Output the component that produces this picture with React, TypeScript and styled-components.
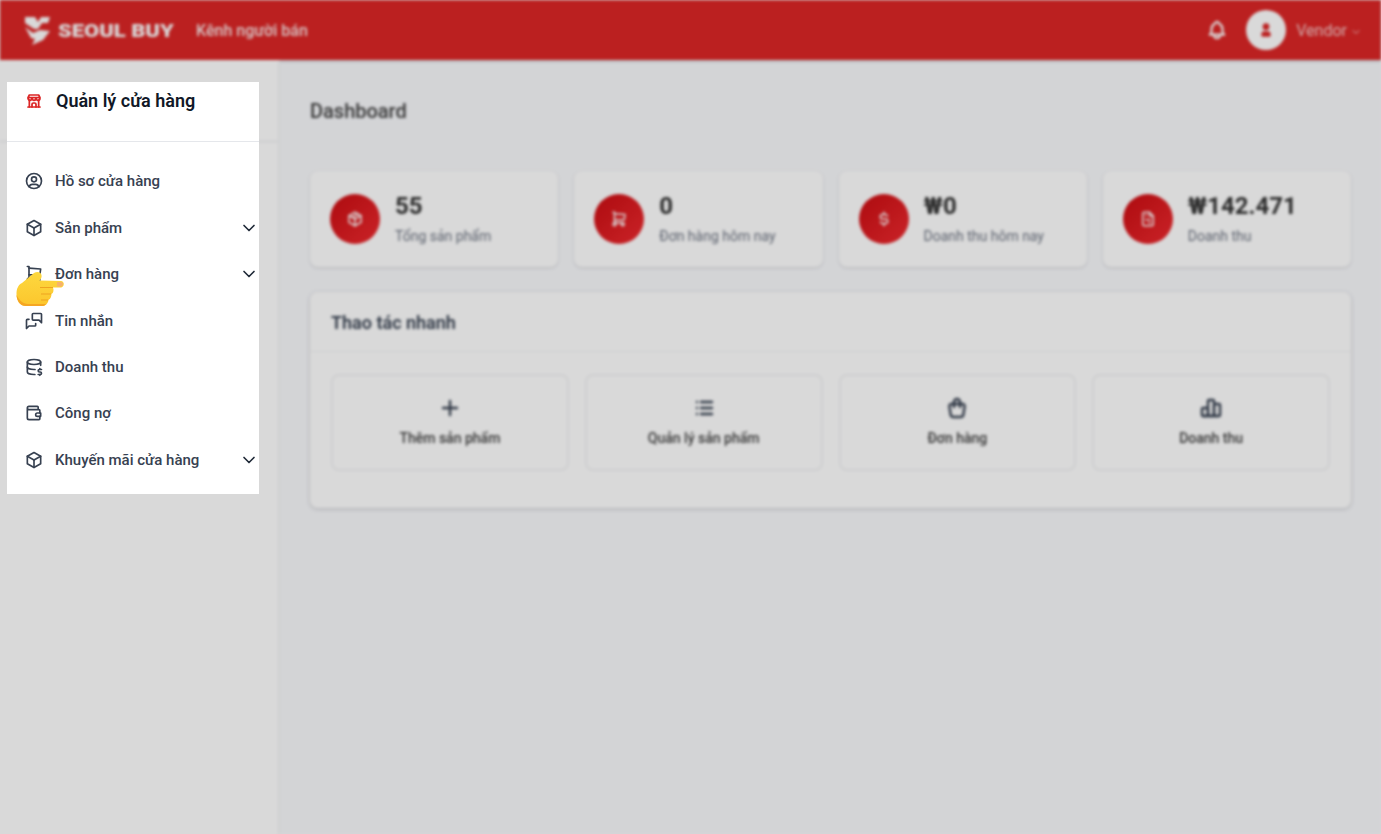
import React from 'react';
import styled, { createGlobalStyle } from 'styled-components';
import {
  TbBell,
  TbBox,
  TbBuildingStore,
  TbChartBar,
  TbChevronDown,
  TbCurrencyDollar,
  TbDatabaseDollar,
  TbFileInvoice,
  TbList,
  TbMessages,
  TbPackage,
  TbPlus,
  TbShoppingBag,
  TbShoppingCart,
  TbUserFilled,
  TbUserCircle,
  TbWallet,
} from 'react-icons/tb';

const stats = [
  { icon: <TbPackage />, value: '55', label: 'Tổng sản phẩm' },
  { icon: <TbShoppingCart />, value: '0', label: 'Đơn hàng hôm nay' },
  { icon: <TbCurrencyDollar />, value: '₩0', label: 'Doanh thu hôm nay' },
  { icon: <TbFileInvoice />, value: '₩142.471', label: 'Doanh thu' },
];

const actions = [
  { icon: <TbPlus />, label: 'Thêm sản phẩm' },
  { icon: <TbList />, label: 'Quản lý sản phẩm' },
  { icon: <TbShoppingBag />, label: 'Đơn hàng' },
  { icon: <TbChartBar />, label: 'Doanh thu' },
];

const menu = [
  { icon: <TbUserCircle />, label: 'Hồ sơ cửa hàng' },
  { icon: <TbBox />, label: 'Sản phẩm', sub: true },
  { icon: <TbShoppingCart />, label: 'Đơn hàng', sub: true },
  { icon: <TbMessages />, label: 'Tin nhắn' },
  { icon: <TbDatabaseDollar />, label: 'Doanh thu' },
  { icon: <TbWallet />, label: 'Công nợ' },
  { icon: <TbBox />, label: 'Khuyến mãi cửa hàng', sub: true },
];

const Logo = () => (
  <svg width="27" height="30" viewBox="0 0 27 30" fill="#fff">
    <path d="M1 2h10l3 5 3-5h9l-2 6h-6l-4 6h-4L1 8z" />
    <path d="M1 12l8 6 7-3 10 1-7 9-11 5 3-6-4-1z" />
  </svg>
);

const PointingHand = () => (
  <svg width="48" height="36" viewBox="0 0 48 36">
    <defs>
      <linearGradient id="handFill" x1="0" y1="0" x2="0" y2="1">
        <stop offset="0" stopColor="#fdd83f" />
        <stop offset="1" stopColor="#fcc62d" />
      </linearGradient>
    </defs>
    <path
      fill="url(#handFill)"
      d="M0.500 23C0.500 18 2 14 6 12L18 2C21 0 25 1 25.500 4C26 6 25 8 23.500 9.500L45 10C47 10 47.800 12 47.800 13C47.800 15 46 16.500 45 16.500L37 16.500C38 19 37.500 22 35.500 23C35.500 25 34.500 28 32.500 29C32.500 31 30 35 27 35L10 35C4 35 0.500 30 0.500 23Z"
    />
    <path fill="#f5a623" d="M0.500 24C1 30 4 35 10 35L27 35C28 35 29 34 30 33L12 33C7 33 3 29 0.500 24Z" />
    <path fill="#f6b26b" d="M41 11H45C46.500 11 47 12 47 13C47 14 46 15.500 45 15.500H41Z" />
    <path
      fill="none"
      stroke="#eea320"
      strokeWidth="1"
      d="M24 16.500H37M25 23H35M25 29H32"
    />
  </svg>
);

export default function App() {
  return (
    <>
      <GlobalStyle />
      <S.Page>
        <S.Header>
          <S.Brand>
            <Logo />
            <S.BrandName>SEOUL BUY</S.BrandName>
            <S.BrandTag>Kênh người bán</S.BrandTag>
          </S.Brand>
          <S.HeaderRight>
            <S.Bell>
              <TbBell />
            </S.Bell>
            <S.Avatar>
              <TbUserFilled />
            </S.Avatar>
            <S.UserName>Vendor</S.UserName>
            <S.UserCaret>
              <TbChevronDown />
            </S.UserCaret>
          </S.HeaderRight>
        </S.Header>
        <S.Body>
          <S.SideColumn>
            <S.SideHead />
          </S.SideColumn>
          <S.Main>
            <S.PageTitle>Dashboard</S.PageTitle>
            <S.StatGrid>
              {stats.map((s) => (
                <S.StatCard key={s.label}>
                  <S.StatIcon>{s.icon}</S.StatIcon>
                  <div>
                    <S.StatValue>{s.value}</S.StatValue>
                    <S.StatLabel>{s.label}</S.StatLabel>
                  </div>
                </S.StatCard>
              ))}
            </S.StatGrid>
            <S.Panel>
              <S.PanelHead>Thao tác nhanh</S.PanelHead>
              <S.ActionGrid>
                {actions.map((a) => (
                  <S.ActionCard key={a.label}>
                    <S.ActionIcon>{a.icon}</S.ActionIcon>
                    <S.ActionLabel>{a.label}</S.ActionLabel>
                  </S.ActionCard>
                ))}
              </S.ActionGrid>
            </S.Panel>
          </S.Main>
        </S.Body>
      </S.Page>
      <S.Dim />
      <S.Spotlight>
        <S.SpotHead>
          <S.StoreIcon>
            <TbBuildingStore />
          </S.StoreIcon>
          <S.SpotTitle>Quản lý cửa hàng</S.SpotTitle>
        </S.SpotHead>
        <S.Menu>
          {menu.map((m) => (
            <S.MenuRow key={m.label}>
              <S.MenuIcon>{m.icon}</S.MenuIcon>
              <S.MenuLabel>{m.label}</S.MenuLabel>
              {m.sub && (
                <S.MenuCaret>
                  <TbChevronDown />
                </S.MenuCaret>
              )}
            </S.MenuRow>
          ))}
        </S.Menu>
      </S.Spotlight>
      <S.Pointer>
        <PointingHand />
      </S.Pointer>
    </>
  );
}

const GlobalStyle = createGlobalStyle`
  * {
    box-sizing: border-box;
  }

  body {
    margin: 0;
    font-family: Roboto, 'Liberation Sans', sans-serif;
    overflow: hidden;
  }
`;

const S = {
  Page: styled.div`
    display: flex;
    flex-direction: column;
    height: 834px;
    background-color: #f8f9fc;
    filter: blur(1.5px);
  `,
  Header: styled.header`
    display: flex;
    align-items: center;
    justify-content: space-between;
    flex: 0 0 60px;
    padding: 0 19px 0 24px;
    background-color: #dc2626;
    box-shadow: 0 1px 3px rgba(0, 0, 0, 0.2);
    color: #fff;
  `,
  Brand: styled.div`
    display: flex;
    align-items: center;
  `,
  BrandName: styled.span`
    width: 116px;
    margin-left: 7px;
    font-size: 18px;
    font-weight: 900;
    transform: scaleX(1.22);
    transform-origin: left;
  `,
  BrandTag: styled.span`
    margin-left: 22px;
    font-size: 16px;
    font-weight: 500;
    opacity: 0.9;
  `,
  HeaderRight: styled.div`
    display: flex;
    align-items: center;
  `,
  Bell: styled.span`
    display: flex;
    font-size: 22px;
    margin-right: 18px;

    svg {
      stroke-width: 2.4;
    }
  `,
  Avatar: styled.span`
    display: flex;
    align-items: center;
    justify-content: center;
    width: 40px;
    height: 40px;
    border-radius: 50%;
    background-color: #fff;
    color: #dc2626;
    font-size: 16px;
    margin-right: 10px;
  `,
  UserName: styled.span`
    font-size: 16px;
    opacity: 0.75;
  `,
  UserCaret: styled.span`
    display: flex;
    font-size: 12px;
    margin: 3px 0 0 3px;
    opacity: 0.75;
  `,
  Body: styled.div`
    display: flex;
    flex: 1;
    min-height: 0;
  `,
  SideColumn: styled.aside`
    flex: 0 0 280px;
    background-color: #fff;
    border-right: 2px solid #f3f4f6;
  `,
  SideHead: styled.div`
    height: 82px;
    border-bottom: 1px solid #e5e7eb;
  `,
  Main: styled.main`
    flex: 1;
    padding: 38px 30px 0;
  `,
  PageTitle: styled.h1`
    margin: 0 0 47px;
    font-size: 20px;
    line-height: 26px;
    font-weight: 500;
    color: #404040;
  `,
  StatGrid: styled.div`
    display: grid;
    grid-template-columns: repeat(4, 1fr);
    gap: 16px;
    margin-bottom: 25px;
  `,
  StatCard: styled.div`
    display: flex;
    align-items: center;
    height: 96px;
    padding: 0 20px;
    background-color: #fff;
    border-radius: 8px;
    box-shadow: 0 1px 3px rgba(0, 0, 0, 0.14);
  `,
  StatIcon: styled.span`
    display: flex;
    align-items: center;
    justify-content: center;
    flex: 0 0 50px;
    height: 50px;
    margin-right: 15px;
    border-radius: 50%;
    background: linear-gradient(135deg, #cc0d12, #ee2a2f);
    color: #fff;
    font-size: 18px;
  `,
  StatValue: styled.div`
    margin-top: -2px;
    font-size: 24px;
    line-height: 30px;
    font-weight: 700;
    color: #333;
  `,
  StatLabel: styled.div`
    margin-top: 6px;
    font-size: 14px;
    line-height: 18px;
    color: #6b7280;
  `,
  Panel: styled.section`
    background-color: #fff;
    border-radius: 8px;
    box-shadow: 0 1px 4px rgba(0, 0, 0, 0.18);
  `,
  PanelHead: styled.h2`
    margin: 0;
    padding: 19px 21px 0;
    height: 60px;
    border-bottom: 1px solid #f3f4f6;
    font-size: 18px;
    line-height: 24px;
    font-weight: 600;
    color: #374151;
  `,
  ActionGrid: styled.div`
    display: grid;
    grid-template-columns: repeat(4, 1fr);
    gap: 16px;
    padding: 22px 21px 37px;
  `,
  ActionCard: styled.div`
    display: flex;
    flex-direction: column;
    align-items: center;
    height: 97px;
    padding-top: 20px;
    border: 2px solid #f3f4f6;
    border-radius: 8px;
  `,
  ActionIcon: styled.span`
    display: flex;
    font-size: 24px;
    color: #374151;

    svg {
      stroke-width: 2.4;
    }
  `,
  ActionLabel: styled.span`
    margin-top: 9px;
    font-size: 14px;
    line-height: 18px;
    font-weight: 500;
    color: #404040;
  `,
  Dim: styled.div`
    position: fixed;
    inset: 0;
    background-color: rgba(0, 0, 0, 0.15);
  `,
  Spotlight: styled.nav`
    position: fixed;
    top: 82px;
    left: 7px;
    width: 252px;
    height: 412px;
    background-color: #fff;
  `,
  SpotHead: styled.div`
    display: flex;
    align-items: flex-start;
    height: 60px;
    padding: 7px 0 0 19px;
    border-bottom: 1px solid #e5e7eb;
  `,
  StoreIcon: styled.span`
    display: flex;
    margin: 4px 14px 0 0;
    font-size: 16px;
    color: #dc2626;

    svg {
      stroke-width: 2.6;
    }
  `,
  SpotTitle: styled.span`
    font-size: 18px;
    line-height: 24px;
    font-weight: 600;
    color: #111827;
  `,
  Menu: styled.ul`
    display: flex;
    flex-direction: column;
    margin: 0;
    padding: 16.200px 0 0;
    list-style: none;
  `,
  MenuRow: styled.li`
    display: flex;
    align-items: center;
    height: 46.400px;
    padding: 0 0 0 17px;
  `,
  MenuIcon: styled.span`
    display: flex;
    flex: 0 0 20px;
    margin-right: 11px;
    font-size: 20px;
    color: #374151;
  `,
  MenuLabel: styled.span`
    flex: 1;
    font-size: 15px;
    font-weight: 500;
    color: #374151;
  `,
  MenuCaret: styled.span`
    display: flex;
    font-size: 20px;
    color: #1f2937;
  `,
  Pointer: styled.div`
    position: fixed;
    top: 271px;
    left: 16px;
    display: flex;
  `,
};
